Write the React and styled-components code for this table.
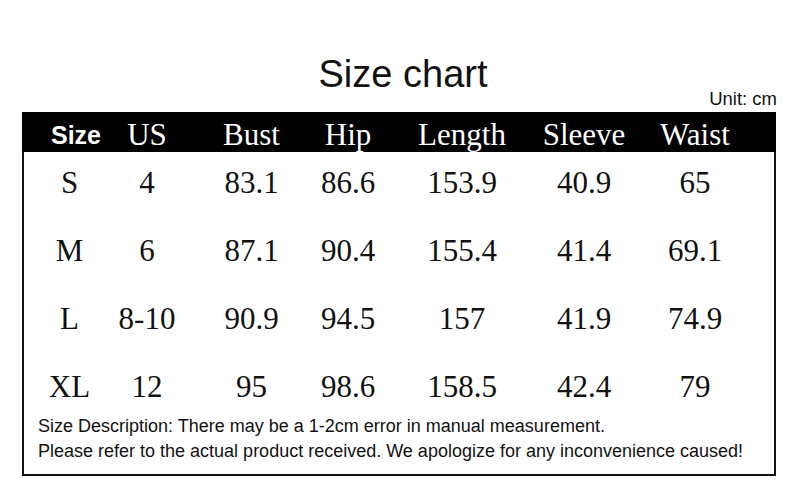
import React from "react";
import styled, { createGlobalStyle } from "styled-components";

const Global = createGlobalStyle`
  html, body { margin: 0; padding: 0; background: #fff; }
  body { width: 800px; height: 496px; overflow: hidden; }
`;

const Page = styled.div`
  width: 800px;
  height: 496px;
  background: #fff;
  color: #111;
`;

const HeadArea = styled.div`
  display: grid;
  height: 112px;
  box-sizing: border-box;
  padding: 51.8px 23px 3.2px 22px;
`;

const Title = styled.h1`
  grid-area: 1 / 1;
  justify-self: center;
  align-self: start;
  margin: 0;
  padding-left: 7px;
  font-family: "Liberation Sans", Arial, sans-serif;
  font-weight: 400;
  font-size: 38px;
  line-height: 44px;
`;

const Unit = styled.div`
  grid-area: 1 / 1;
  justify-self: end;
  align-self: end;
  font-family: "Liberation Sans", Arial, sans-serif;
  font-size: 18.5px;
  line-height: 20px;
`;

const Table = styled.div`
  margin: 0 24px 0 22px;
  border: 2px solid #111;
  box-sizing: border-box;
`;

const cols = "91px 64px 145px 48px 180px 64px 158px";

const HeadRow = styled.div`
  display: grid;
  grid-template-columns: ${cols};
  height: 40px;
  box-sizing: border-box;
  padding-top: 4px;
  background: #000;
  color: #fff;
  margin: -2px -2px 0 -2px;
  border: 2px solid #000;
  border-bottom: none;
`;

const HeadCell = styled.div`
  display: flex;
  justify-content: center;
  white-space: nowrap;
  line-height: 34px;
  font-family: ${(p) =>
    p.$sans ? '"Liberation Sans", Arial, sans-serif' : '"Liberation Serif", "Times New Roman", serif'};
  font-weight: ${(p) => (p.$sans ? 700 : 400)};
  font-size: ${(p) => (p.$sans ? "25px" : "31px")};
  padding-left: ${(p) => (p.$sans ? "13px" : "0")};
`;

const Row = styled.div`
  display: grid;
  grid-template-columns: ${cols};
  padding-top: 13.5px;
  padding-bottom: ${(p) => (p.$last ? "10px" : "20.5px")};
`;

const Cell = styled.div`
  display: flex;
  justify-content: center;
  white-space: nowrap;
  font-family: "Liberation Serif", "Times New Roman", serif;
  font-size: 31px;
  line-height: 34px;
  color: #111;
`;

const Footer = styled.div`
  padding: 0 0 10.5px 14px;
  font-family: "Liberation Sans", Arial, sans-serif;
  font-size: 18px;
  line-height: 25px;
  color: #111;
  white-space: nowrap;
`;

const headers = ["Size", "US", "Bust", "Hip", "Length", "Sleeve", "Waist"];
const rows = [
  ["S", "4", "83.1", "86.6", "153.9", "40.9", "65"],
  ["M", "6", "87.1", "90.4", "155.4", "41.4", "69.1"],
  ["L", "8-10", "90.9", "94.5", "157", "41.9", "74.9"],
  ["XL", "12", "95", "98.6", "158.5", "42.4", "79"],
];

export default function App() {
  return (
    <Page>
      <Global />
      <HeadArea>
        <Title>Size chart</Title>
        <Unit>Unit: cm</Unit>
      </HeadArea>
      <Table>
        <HeadRow>
          {headers.map((h, i) => (
            <HeadCell key={h} $sans={i === 0}>
              {h}
            </HeadCell>
          ))}
        </HeadRow>
        {rows.map((r, ri) => (
          <Row key={r[0]} $last={ri === rows.length - 1}>
            {r.map((c, ci) => (
              <Cell key={ci}>{c}</Cell>
            ))}
          </Row>
        ))}
        <Footer>
          <div>Size Description: There may be a 1-2cm error in manual measurement.</div>
          <div>Please refer to the actual product received. We apologize for any inconvenience caused!</div>
        </Footer>
      </Table>
    </Page>
  );
}
